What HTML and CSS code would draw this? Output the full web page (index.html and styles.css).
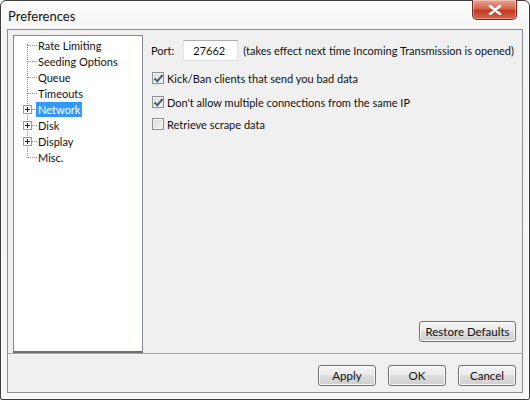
FILE: index.html
```html
<!DOCTYPE html>
<html>
<head>
<meta charset="utf-8">
<link rel="stylesheet" href="styles.css">
</head>
<body>
<div class="window">
  <div class="titlebar">
    <span class="title">Preferences</span>
    <div class="close"><svg width="14" height="10" viewBox="0 0 14 10"><path d="M2 1 L12 9 M12 1 L2 9" stroke="#fff" stroke-width="2.6" stroke-linecap="round"/><path d="M2 1 L12 9 M12 1 L2 9" stroke="#fff" stroke-width="1.6"/></svg></div>
  </div>
  <div class="client">
    <div class="main">
      <div class="tree">
        <div class="vline"></div>
        <div class="node"><span class="branch"></span><span class="label">Rate Limiting</span></div>
        <div class="node"><span class="branch"></span><span class="label">Seeding Options</span></div>
        <div class="node"><span class="branch"></span><span class="label">Queue</span></div>
        <div class="node"><span class="branch"></span><span class="label">Timeouts</span></div>
        <div class="node"><span class="branch"></span><span class="plus"></span><span class="label sel">Network</span></div>
        <div class="node"><span class="branch"></span><span class="plus"></span><span class="label">Disk</span></div>
        <div class="node"><span class="branch"></span><span class="plus"></span><span class="label">Display</span></div>
        <div class="node"><span class="branch"></span><span class="label">Misc.</span></div>
      </div>
      <div class="panel">
        <div class="portrow">
          <span>Port:</span>
          <div class="input">27662</div>
          <span>(takes effect next time Incoming Transmission is opened)</span>
        </div>
        <div class="check c1"><span class="box on"></span><span>Kick/Ban clients that send you bad data</span></div>
        <div class="check c2"><span class="box on"></span><span>Don't allow multiple connections from the same IP</span></div>
        <div class="check c3"><span class="box"></span><span>Retrieve scrape data</span></div>
        <div class="spacer"></div>
        <div class="restore"><button class="btn wide">Restore Defaults</button></div>
      </div>
    </div>
    <div class="buttons">
      <button class="btn">Apply</button>
      <button class="btn">OK</button>
      <button class="btn">Cancel</button>
    </div>
  </div>
</div>
</body>
</html>
```

FILE: styles.css
```css
* { box-sizing: border-box; }
html, body { margin: 0; padding: 0; background: #fff; }
body { font-family: Lato, "Liberation Sans", sans-serif; font-size: 11px; color: #111; white-space: nowrap; }

.window {
  width: 530px;
  height: 400px;
  border: 1px solid #3c3c3c;
  border-radius: 6px 6px 2px 2px;
  background: linear-gradient(#fbfbfb, #f3f3f3 40px, #f6f6f6);
  display: flex;
  flex-direction: column;
  padding: 0 6px 6px 6px;
  box-shadow: inset 0 0 0 1px #fff;
}
.titlebar {
  height: 28px;
  display: flex;
  align-items: center;
  position: relative;
}
.title { font-size: 13px; color: #111; margin-left: 1px; margin-top: 1px; }
.close {
  position: absolute;
  right: 6px;
  top: -1px;
  width: 45px;
  height: 20px;
  border: 1px solid #7a2a22;
  border-top: none;
  border-radius: 0 0 5px 5px;
  background: linear-gradient(#e8a596, #d4654f 45%, #c03b24 55%, #d0654d);
  box-shadow: inset 0 0 0 1px rgba(255,255,255,0.35);
  display: flex;
  align-items: center;
  justify-content: center;
}
.client {
  flex: 1;
  background: #f0f0f0;
  border: 1px solid #8c8c8c;
  display: flex;
  flex-direction: column;
}
.main {
  height: 324px;
  display: flex;
  padding: 5px 6px 0 5px;
  border-bottom: 1px solid #a0a0a0;
  box-shadow: 0 1px 0 #fff;
}
.tree {
  flex: none;
  width: 130px;
  background: #fff;
  border: 1px solid #828790;
  border-bottom: 2px solid #707070;
  padding-top: 1px;
  position: relative;
}
.vline {
  position: absolute;
  left: 13px;
  top: 8px;
  height: 114px;
  border-left: 1px dotted #888;
}
.node {
  height: 16px;
  display: flex;
  align-items: center;
  position: relative;
}
.branch {
  position: absolute;
  left: 14px;
  top: 8px;
  width: 9px;
  border-top: 1px dotted #888;
}
.plus {
  position: absolute;
  left: 9px;
  top: 4px;
  width: 9px;
  height: 9px;
  border: 1px solid #9a9a9a;
  background: #fff;
}
.plus::before {
  content: "";
  position: absolute;
  left: 1px; top: 3px; width: 5px; height: 1px; background: #222;
}
.plus::after {
  content: "";
  position: absolute;
  left: 3px; top: 1px; width: 1px; height: 5px; background: #222;
}
.label {
  margin-left: 22px;
  padding: 1px 2px;
  line-height: 13px;
}
.label.sel { background: #3399ff; color: #fff; }

.panel {
  flex: 1;
  min-width: 0;
  display: flex;
  flex-direction: column;
  padding-left: 8px;
  padding-top: 4px;
}
.portrow {
  display: flex;
  align-items: center;
  height: 22px;
}
.input {
  width: 55px;
  height: 21px;
  background: #fff;
  border: 1px solid #e2e3ea;
  border-top-color: #abadb3;
  margin: 0 5px 0 9px;
  padding: 3px 0 0 9px;
}
.check {
  display: flex;
  align-items: center;
  height: 16px;
}
.c1 { margin-top: 9px; }
.c2 { margin-top: 8px; }
.c3 { margin-top: 6px; }
.box {
  width: 12px;
  height: 12px;
  border: 1px solid #8e8f8f;
  background: linear-gradient(135deg, #d8d8d8, #f8f8f8);
  margin: 0 3px 0 1px;
  position: relative;
  box-shadow: inset 0 0 0 1px #f4f4f4;
}
.box.on::after {
  content: "";
  position: absolute;
  left: 3px;
  top: 0px;
  width: 3px;
  height: 7px;
  border-right: 2px solid #4b5b77;
  border-bottom: 2px solid #4b5b77;
  transform: rotate(40deg);
}
.spacer { flex: 1; }
.restore { display: flex; justify-content: flex-end; padding-bottom: 11px; }
.btn {
  font-family: Lato, "Liberation Sans", sans-serif;
  font-size: 11.5px;
  color: #111;
  width: 58px;
  height: 21px;
  border: 1px solid #707070;
  border-radius: 3px;
  background: linear-gradient(#f2f2f2, #ebebeb 45%, #dddddd 50%, #cfcfcf);
  box-shadow: inset 0 0 0 1px #fcfcfc;
  padding: 0;
}
.btn.wide { width: 97px; }
.buttons {
  display: flex;
  justify-content: flex-end;
  gap: 12px;
  padding: 11px 6px 0 0;
}
```
